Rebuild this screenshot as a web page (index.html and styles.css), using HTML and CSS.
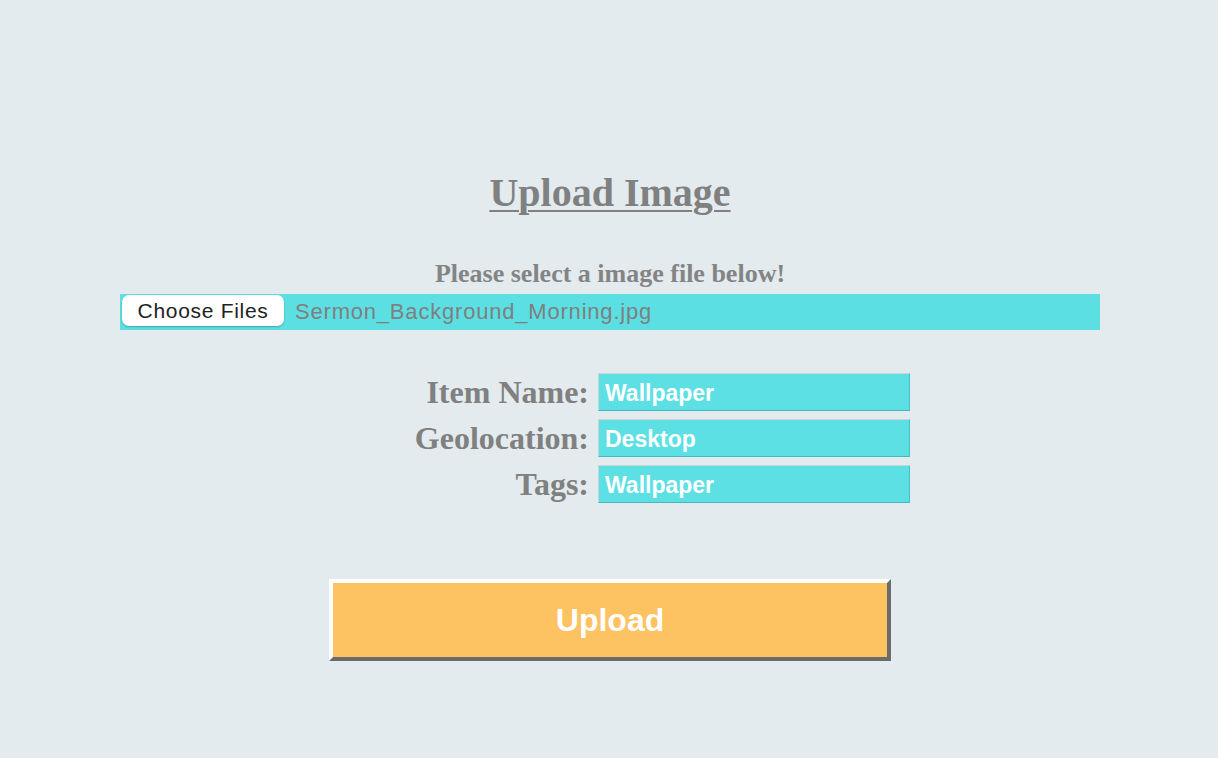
FILE: index.html
```html
<!DOCTYPE html>
<html lang="en">
<head>
<meta charset="utf-8">
<title>Upload Image</title>
<link rel="stylesheet" href="styles.css">
</head>
<body>
<main class="page">
  <h1 class="title">Upload Image</h1>
  <p class="hint">Please select a image file below!</p>
  <div class="file-row">
    <span class="file-btn">Choose Files</span>
    <span class="file-name">Sermon_Background_Morning.jpg</span>
  </div>
  <form class="fields">
    <label class="field-label" for="name">Item Name:</label>
    <input class="field-input" id="name" type="text" value="Wallpaper">
    <label class="field-label" for="geo">Geolocation:</label>
    <input class="field-input" id="geo" type="text" value="Desktop">
    <label class="field-label" for="tags">Tags:</label>
    <input class="field-input" id="tags" type="text" value="Wallpaper">
  </form>
  <button class="upload" type="button">Upload</button>
</main>
</body>
</html>
```

FILE: styles.css
```css
html, body {
  margin: 0;
  padding: 0;
  background: #e3ebee;
}

.page {
  min-height: 758px;
  box-sizing: border-box;
  padding-top: 170px;
  padding-left: 2px;
  display: flex;
  flex-direction: column;
  align-items: center;
  font-family: "Liberation Serif", "Times New Roman", serif;
  color: #808080;
}

.title {
  margin: 0;
  font-size: 40px;
  line-height: 46px;
  font-weight: bold;
  text-decoration: underline;
  text-decoration-thickness: 2px;
  text-underline-offset: 4px;
}

.hint {
  margin: 43px 0 0;
  font-size: 26px;
  line-height: 29px;
  font-weight: bold;
  color: #848484;
}

.file-row {
  margin-top: 6px;
  width: 980px;
  height: 36px;
  box-sizing: border-box;
  background: #5cdfe3;
  display: flex;
  align-items: flex-start;
  padding: 1px 2px;
  font-family: "Liberation Sans", Arial, sans-serif;
}

.file-btn {
  width: 162px;
  height: 31px;
  box-sizing: border-box;
  background: #fff;
  border-radius: 7px;
  box-shadow: 0 1px 2px rgba(0, 0, 0, 0.25);
  color: #222;
  font-size: 21px;
  letter-spacing: 0.7px;
  line-height: 32px;
  text-align: center;
}

.file-name {
  margin-left: 11px;
  color: #7f7f7f;
  font-size: 22px;
  letter-spacing: 0.8px;
  line-height: 34px;
}

.fields {
  margin: 43px 0 0;
  align-self: stretch;
  display: grid;
  grid-template-columns: 1fr 312px;
  column-gap: 9px;
  row-gap: 8px;
  padding-right: 308px;
}

.field-label {
  text-align: right;
  font-size: 32px;
  font-weight: bold;
  line-height: 38px;
  color: #808080;
}

.field-input {
  width: 312px;
  height: 38px;
  box-sizing: border-box;
  margin: 0;
  padding: 3px 6px 0;
  border: 1px solid;
  border-color: #c9d4d7 #49c0c5 #45b6bb #c9d4d7;
  background: #5ce0e4;
  color: #fff;
  font-family: "Liberation Sans", Arial, sans-serif;
  font-size: 23px;
  font-weight: bold;
  outline: none;
}

.upload {
  margin-top: 76px;
  width: 562px;
  height: 82px;
  box-sizing: border-box;
  border: 4px solid;
  border-color: #fff #6b6b6b #6b6b6b #fff;
  background: #fdc262;
  color: #fff;
  font-family: "Liberation Sans", Arial, sans-serif;
  font-size: 32px;
  font-weight: bold;
  cursor: pointer;
}
```
